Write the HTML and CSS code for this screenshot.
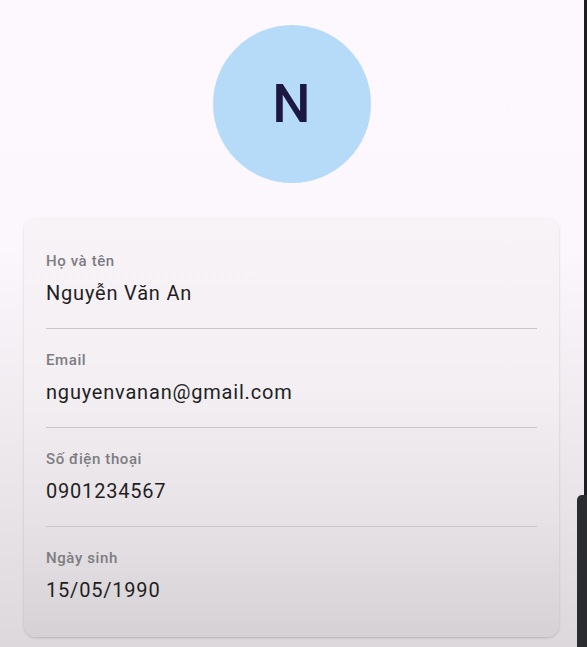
FILE: index.html
```html
<!DOCTYPE html>
<html lang="vi">
<head>
<meta charset="utf-8">
<title>Hồ sơ</title>
<link rel="stylesheet" href="styles.css">
</head>
<body>
<main class="screen">
  <div class="avatar"><span class="avatar-letter">N</span></div>
  <section class="card">
    <div class="field">
      <div class="label">Họ và tên</div>
      <div class="value">Nguyễn Văn An</div>
    </div>
    <div class="field">
      <div class="label">Email</div>
      <div class="value">nguyenvanan@gmail.com</div>
    </div>
    <div class="field">
      <div class="label">Số điện thoại</div>
      <div class="value">0901234567</div>
    </div>
    <div class="field">
      <div class="label">Ngày sinh</div>
      <div class="value">15/05/1990</div>
    </div>
  </section>
</main>
<div class="edge-stripe"></div>
<div class="edge-pill"></div>
</body>
</html>
```

FILE: styles.css
```css
html, body {
  margin: 0;
  padding: 0;
}

body {
  width: 587px;
  height: 647px;
  overflow: hidden;
  position: relative;
  font-family: Roboto, "Noto Sans", "Liberation Sans", sans-serif;
  background: linear-gradient(to bottom, #fdf8fd 0%, #fcf7fc 38%, #ece8ec 70%, #dcd8dc 100%);
}

.screen {
  display: flex;
  flex-direction: column;
  align-items: center;
  width: 535px;
  padding: 25px 0 0 24px;
}

.avatar {
  width: 158px;
  height: 158px;
  border-radius: 50%;
  background: #b6dbf9;
  display: flex;
  align-items: center;
  justify-content: center;
}

.avatar-letter {
  font-size: 54px;
  font-weight: 500;
  color: #1d1842;
  line-height: 1;
}

.card {
  align-self: stretch;
  margin-top: 35px;
  padding: 12px 22px 12px;
  border-radius: 12px;
  background: linear-gradient(to bottom, #f7f3f7 0%, #f3eff3 40%, #e6e2e6 72%, #d5d1d5 100%);
  box-shadow: 0 1px 3px rgba(0, 0, 0, 0.12), 0 1px 2px rgba(0, 0, 0, 0.06);
}

.field {
  display: flex;
  flex-direction: column;
  gap: 8px;
  padding: 21px 0;
  border-bottom: 1px solid #c9c5ca;
}

.field:last-child {
  border-bottom: none;
}

.label {
  font-size: 15px;
  line-height: 20px;
  font-weight: 500;
  letter-spacing: 0.6px;
  color: #7d7c82;
}

.value {
  font-size: 20px;
  line-height: 28px;
  letter-spacing: 0.8px;
  color: #1f1f23;
}

.edge-stripe {
  position: absolute;
  top: 0;
  right: 0;
  width: 3px;
  height: 647px;
  background: #1e1e22;
}

.edge-pill {
  position: absolute;
  top: 495px;
  right: 0;
  width: 10px;
  height: 152px;
  background: #2b2c30;
  border-top-left-radius: 5px;
}
```
